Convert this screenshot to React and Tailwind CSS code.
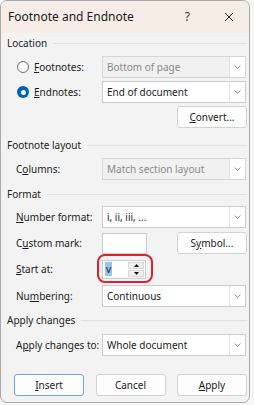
import React from "react";

function Chevron() {
  return (
    <svg width="7" height="4" viewBox="0 0 7 4" fill="none">
      <path d="M0.5 0.5 L3.5 3.3 L6.5 0.5" stroke="#7a7a7a" strokeWidth="0.9" />
    </svg>
  );
}

function Select({ text, disabled }) {
  return (
    <div
      className={`w-[144px] h-[22px] border flex items-center ${
        disabled
          ? "border-[#d6d6d6] bg-[#f1f1f1] text-[#8a8a8a]"
          : "border-[#cdcdcd] bg-white text-[#1b1b1b]"
      }`}
    >
      <span className="flex-1 pl-[4px] whitespace-nowrap">{text}</span>
      <div className="w-[16px] h-[20px] bg-white border-l border-[#e3e3e3] flex items-center justify-center">
        <Chevron />
      </div>
    </div>
  );
}

function Btn({ children, primary, className = "" }) {
  return (
    <div
      className={`w-[70px] h-[22px] rounded-[3px] bg-[#fdfdfd] border flex items-center justify-center ${
        primary ? "border-[#6fa6de]" : "border-[#d3d3d3]"
      } ${className}`}
    >
      {children}
    </div>
  );
}

function Header({ children, className = "" }) {
  return (
    <div className={`flex items-center h-[16px] pl-[6px] pr-[2px] gap-[6px] ${className}`}>
      <span className="whitespace-nowrap">{children}</span>
      <div className="flex-1 h-px bg-[#e1e1e1]" />
    </div>
  );
}

function Row({ label, children, className = "" }) {
  return (
    <div className={`flex items-center h-[22px] ${className}`}>
      <div className="w-[101px] pl-[15px] whitespace-nowrap">{label}</div>
      {children}
    </div>
  );
}

const U = ({ children }) => <span className="underline underline-offset-[1px]">{children}</span>;

export default function App() {
  return (
    <div className="w-[254px] h-[405px] bg-[#f7f7f7] font-['Noto_Sans',sans-serif] text-[10px] text-[#1b1b1b] leading-none">
      <div className="w-[250px] h-[403px] rounded-[7px] border border-[#a9a9a9] bg-[#f3f3f3] overflow-hidden flex flex-col">
        <div className="h-[32px] shrink-0 bg-[#f6eee6] flex items-center pl-[7px]">
          <span className="text-[12px] text-[#1a1a1a]">Footnote and Endnote</span>
          <span className="ml-auto text-[12px] text-[#333] mr-[34px]">?</span>
          <svg width="10" height="10" viewBox="0 0 10 10" className="mr-[15px]">
            <path d="M1 1 L9 9 M9 1 L1 9" stroke="#222" strokeWidth="1" />
          </svg>
        </div>

        <Header className="mt-[2px]">Location</Header>

        <div className="flex items-center h-[22px] mt-[5px]">
          <div className="w-[101px] pl-[16px] flex items-center gap-[5px]">
            <div className="w-[12px] h-[12px] rounded-full border border-[#6e6e6e] bg-[#fafafa]" />
            <span>
              <U>F</U>ootnotes:
            </span>
          </div>
          <Select text="Bottom of page" disabled />
        </div>
        <div className="flex items-center h-[22px] mt-[3px]">
          <div className="w-[101px] pl-[16px] flex items-center gap-[5px]">
            <div className="w-[12px] h-[12px] rounded-full bg-[#005fb8] flex items-center justify-center">
              <div className="w-[5px] h-[5px] rounded-full bg-white" />
            </div>
            <span>
              <U>E</U>ndnotes:
            </span>
          </div>
          <Select text="End of document" />
        </div>
        <div className="flex justify-end mt-[3px] pr-[2px]">
          <Btn>
            <span>
              <U>C</U>onvert...
            </span>
          </Btn>
        </div>

        <Header className="mt-[9px]">Footnote layout</Header>
        <Row
          className="mt-[5px]"
          label={
            <span>
              C<U>o</U>lumns:
            </span>
          }
        >
          <Select text="Match section layout" disabled />
        </Row>

        <Header className="mt-[6px]">Format</Header>
        <Row
          className="mt-[4px]"
          label={
            <span>
              <U>N</U>umber format:
            </span>
          }
        >
          <Select text="i, ii, iii, ..." />
        </Row>
        <Row
          className="mt-[4px]"
          label={
            <span>
              C<U>u</U>stom mark:
            </span>
          }
        >
          <div className="w-[45px] h-[21px] bg-white border border-[#cdcdcd]" />
          <Btn className="ml-auto mr-[2px]">
            <span>
              S<U>y</U>mbol...
            </span>
          </Btn>
        </Row>
        <Row
          className="mt-[4px]"
          label={
            <span>
              <U>S</U>tart at:
            </span>
          }
        >
          <div className="relative">
            <div className="w-[44px] h-[19px] bg-white border border-[#cdcdcd] flex items-center">
              <span className="ml-[2px] px-[1px] h-[14px] bg-[#99c4ec] text-[#1b1b1b] flex items-center">v</span>
              <div className="ml-auto mr-[1px] w-[16px] h-[15px] flex flex-col gap-[1px]">
                <div className="flex-1 bg-[#f0f0f0] border border-[#d8d8d8] flex items-center justify-center">
                  <svg width="5" height="3" viewBox="0 0 5 3">
                    <path d="M0 3 L2.5 0 L5 3 Z" fill="#111" />
                  </svg>
                </div>
                <div className="flex-1 bg-[#f0f0f0] border border-[#d8d8d8] flex items-center justify-center">
                  <svg width="5" height="3" viewBox="0 0 5 3">
                    <path d="M0 0 L2.5 3 L5 0 Z" fill="#111" />
                  </svg>
                </div>
              </div>
            </div>
            <div className="absolute left-[-5px] top-[-6px] w-[56px] h-[29px] rounded-[8px] border-2 border-[#e0202a]" />
          </div>
        </Row>
        <Row
          className="mt-[5px]"
          label={
            <span>
              Nu<U>m</U>bering:
            </span>
          }
        >
          <Select text="Continuous" />
        </Row>

        <Header className="mt-[5px]">Apply changes</Header>
        <Row
          className="mt-[6px]"
          label={
            <span>
              A<U>p</U>ply changes to:
            </span>
          }
        >
          <Select text="Whole document" />
        </Row>

        <div className="flex justify-between pl-[13px] pr-[2px] mt-[18px]">
          <Btn primary>
            <span>
              <U>I</U>nsert
            </span>
          </Btn>
          <Btn>Cancel</Btn>
          <Btn>
            <span>
              <U>A</U>pply
            </span>
          </Btn>
        </div>
      </div>
    </div>
  );
}
